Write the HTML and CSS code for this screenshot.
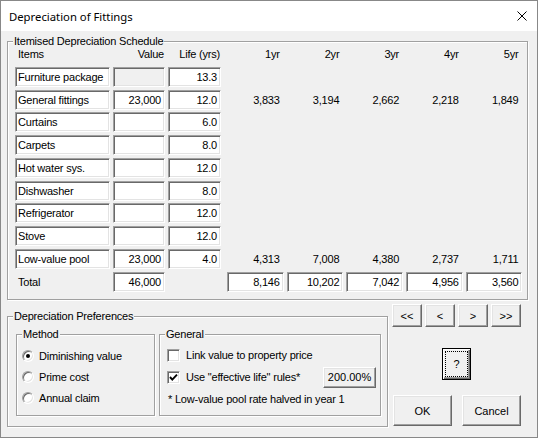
FILE: index.html
```html
<!DOCTYPE html>
<html lang="en">
<head>
    <meta charset="UTF-8">
    <title>Depreciation of Fittings</title>
    <link rel="stylesheet" href="styles.css">
</head>
<body>
    <div class="window">
        <div class="titlebar">
            <span class="title">Depreciation of Fittings</span>
            <svg class="close" width="10" height="10" viewBox="0 0 10 10">
                <path d="M0.5 0.5 L9.5 9.5 M9.5 0.5 L0.5 9.5" stroke="#000" stroke-width="1" fill="none"/>
            </svg>
        </div>

        <div class="client">
            <div class="group schedule">
                <span class="group-label">Itemised Depreciation Schedule</span>
                <div class="row head">
                    <span class="cell name">Items</span>
                    <span class="cell value">Value</span>
                    <span class="cell life">Life (yrs)</span>
                    <span class="cell yr">1yr</span>
                    <span class="cell yr">2yr</span>
                    <span class="cell yr">3yr</span>
                    <span class="cell yr">4yr</span>
                    <span class="cell yr">5yr</span>
                </div>
                <div class="row">
                    <span class="cell field name">Furniture package</span>
                    <span class="cell field value disabled"></span>
                    <span class="cell field life">13.3</span>
                </div>
                <div class="row">
                    <span class="cell field name">General fittings</span>
                    <span class="cell field value">23,000</span>
                    <span class="cell field life">12.0</span>
                    <span class="cell yr">3,833</span>
                    <span class="cell yr">3,194</span>
                    <span class="cell yr">2,662</span>
                    <span class="cell yr">2,218</span>
                    <span class="cell yr">1,849</span>
                </div>
                <div class="row">
                    <span class="cell field name">Curtains</span>
                    <span class="cell field value"></span>
                    <span class="cell field life">6.0</span>
                </div>
                <div class="row">
                    <span class="cell field name">Carpets</span>
                    <span class="cell field value"></span>
                    <span class="cell field life">8.0</span>
                </div>
                <div class="row">
                    <span class="cell field name">Hot water sys.</span>
                    <span class="cell field value"></span>
                    <span class="cell field life">12.0</span>
                </div>
                <div class="row">
                    <span class="cell field name">Dishwasher</span>
                    <span class="cell field value"></span>
                    <span class="cell field life">8.0</span>
                </div>
                <div class="row">
                    <span class="cell field name">Refrigerator</span>
                    <span class="cell field value"></span>
                    <span class="cell field life">12.0</span>
                </div>
                <div class="row">
                    <span class="cell field name">Stove</span>
                    <span class="cell field value"></span>
                    <span class="cell field life">12.0</span>
                </div>
                <div class="row">
                    <span class="cell field name">Low-value pool</span>
                    <span class="cell field value">23,000</span>
                    <span class="cell field life">4.0</span>
                    <span class="cell yr">4,313</span>
                    <span class="cell yr">7,008</span>
                    <span class="cell yr">4,380</span>
                    <span class="cell yr">2,737</span>
                    <span class="cell yr">1,711</span>
                </div>
                <div class="row">
                    <span class="cell name total">Total</span>
                    <span class="cell field value">46,000</span>
                    <span class="cell life"></span>
                    <span class="cell field yr">8,146</span>
                    <span class="cell field yr">10,202</span>
                    <span class="cell field yr">7,042</span>
                    <span class="cell field yr">4,956</span>
                    <span class="cell field yr">3,560</span>
                </div>
            </div>

            <div class="bottom">
                <div class="group prefs">
                    <span class="group-label">Depreciation Preferences</span>
                    <div class="group method">
                        <span class="group-label">Method</span>
                        <div class="option"><span class="radio on"></span><span class="option-text">Diminishing value</span></div>
                        <div class="option"><span class="radio"></span><span class="option-text">Prime cost</span></div>
                        <div class="option"><span class="radio"></span><span class="option-text">Annual claim</span></div>
                    </div>
                    <div class="group general">
                        <span class="group-label">General</span>
                        <div class="line">
                            <span class="check"></span>
                            <span class="check-text">Link value to property price</span>
                        </div>
                        <div class="line">
                            <span class="check">
                                <svg width="11" height="11" viewBox="0 0 11 11">
                                    <polyline points="2,5 4.3,7.6 9,2.6" fill="none" stroke="#000" stroke-width="1.9"/>
                                </svg>
                            </span>
                            <span class="check-text">Use "effective life" rules*</span>
                            <button class="btn rate">200.00%</button>
                        </div>
                        <div class="line note">* Low-value pool rate halved in year 1</div>
                    </div>
                </div>

                <div class="actions">
                    <div class="nav">
                        <button class="btn nav-btn">&lt;&lt;</button>
                        <button class="btn nav-btn">&lt;</button>
                        <button class="btn nav-btn">&gt;</button>
                        <button class="btn nav-btn">&gt;&gt;</button>
                    </div>
                    <button class="btn help">?</button>
                    <div class="dialog-buttons">
                        <button class="btn big">OK</button>
                        <button class="btn big">Cancel</button>
                    </div>
                </div>
            </div>
        </div>
    </div>
</body>
</html>
```

FILE: styles.css
```css
* {
    box-sizing: border-box;
}
body {
    margin: 0;
    background-color: #fff;
    font-family: "Liberation Sans", Arial, sans-serif;
    font-size: 11px;
    letter-spacing: -0.2px;
    color: #000;
}
.window {
    width: 538px;
    height: 438px;
    border: 1px solid #888;
    background-color: #f0f0f0;
    display: flex;
    flex-direction: column;
}
.titlebar {
    height: 30px;
    flex-shrink: 0;
    background-color: #fff;
    display: flex;
    align-items: center;
    padding-left: 8px;
}
.title {
    flex: 1;
    font-family: "Segoe UI", "Noto Sans", sans-serif;
    font-size: 11.3px;
    letter-spacing: 0;
}
.close {
    margin-right: 10px;
}
.client {
    padding: 10px 0 0 6px;
}

/* group boxes */
.group {
    position: relative;
    border: 1px solid #a0a0a0;
    box-shadow: inset 1px 1px 0 #fff, 1px 1px 0 #fff;
}
.group-label {
    position: absolute;
    top: -7px;
    left: 5px;
    padding: 0 1px;
    line-height: 13px;
    background-color: #f0f0f0;
    white-space: nowrap;
}

/* schedule */
.schedule {
    width: 521px;
    height: 259px;
    padding: 2px 0 0 7px;
    display: flex;
    flex-direction: column;
    gap: 2.75px;
}
.row {
    display: flex;
    gap: 3px;
    height: 20px;
    flex-shrink: 0;
}
.cell {
    height: 20px;
    line-height: 20px;
    white-space: nowrap;
    overflow: hidden;
}
.name {
    width: 95px;
    padding-left: 3px;
}
.value {
    width: 52px;
    text-align: right;
}
.life {
    width: 53px;
    margin-right: 3px;
    text-align: right;
}
.yr {
    width: 56.7px;
    text-align: right;
    padding-right: 4px;
}
.head .value,
.head .life {
    padding-right: 1px;
}
.field {
    background-color: #fff;
    border: 1px solid;
    border-color: #a0a0a0 #fff #fff #a0a0a0;
    box-shadow: inset 1px 1px 0 #696969, inset -1px -1px 0 #e3e3e3;
    line-height: 18px;
}
.field.name {
    padding-left: 2px;
}
.field.value,
.field.life,
.field.yr {
    padding-right: 3px;
}
.field.disabled {
    background-color: #f0f0f0;
}

/* preferences */
.bottom {
    display: flex;
    align-items: flex-start;
}
.prefs {
    margin-top: 16px;
    width: 381px;
    height: 111px;
    padding: 17px 6px 0 8px;
    display: flex;
    gap: 4px;
}
.method {
    width: 139px;
    height: 82px;
    padding: 10px 0 0 5px;
}
.general {
    width: 222px;
    height: 82px;
    padding: 9px 4px 0 7px;
}
.option {
    height: 21.3px;
    display: flex;
    align-items: center;
}
.radio {
    width: 12px;
    height: 12px;
    border-radius: 50%;
    background-color: #fff;
    border: 1px solid;
    border-color: #a0a0a0 #fff #fff #a0a0a0;
    box-shadow: inset 1px 1px 0 #696969, inset -1px -1px 0 #e3e3e3;
    display: flex;
    align-items: center;
    justify-content: center;
}
.radio.on::after {
    content: "";
    width: 4px;
    height: 4px;
    border-radius: 50%;
    background-color: #000;
}
.option-text {
    margin-left: 5px;
}
.line {
    height: 22px;
    display: flex;
    align-items: center;
}
.check {
    width: 13px;
    height: 13px;
    background-color: #fff;
    border: 1px solid;
    border-color: #a0a0a0 #fff #fff #a0a0a0;
    box-shadow: inset 1px 1px 0 #696969, inset -1px -1px 0 #e3e3e3;
}
.check svg {
    display: block;
}
.check-text {
    margin-left: 6px;
}
.note {
    padding-left: 1px;
}

/* buttons */
.btn {
    font: inherit;
    color: #000;
    background-color: #f0f0f0;
    border: 1px solid;
    border-color: #fff #696969 #696969 #fff;
    box-shadow: inset -1px -1px 0 #a0a0a0, inset 1px 1px 0 #e3e3e3;
    padding: 0;
}
.rate {
    margin-left: auto;
    width: 53px;
    height: 21px;
}
.actions {
    margin: 4px 0 0 4px;
    width: 129px;
    display: flex;
    flex-direction: column;
    align-items: center;
}
.nav {
    display: flex;
    gap: 3px;
}
.nav-btn {
    width: 30px;
    height: 23px;
}
.help {
    margin-top: 21px;
    width: 29px;
    height: 32px;
    border-color: #000;
    box-shadow: inset 1px 1px 0 #fff, inset -1px -1px 0 #696969, inset -2px -2px 0 #a0a0a0;
    outline: 1px dotted #000;
    outline-offset: -4px;
}
.dialog-buttons {
    margin-top: 15px;
    align-self: stretch;
    display: flex;
    gap: 10px;
    padding-left: 1px;
}
.big {
    width: 60px;
    height: 31px;
}
```
